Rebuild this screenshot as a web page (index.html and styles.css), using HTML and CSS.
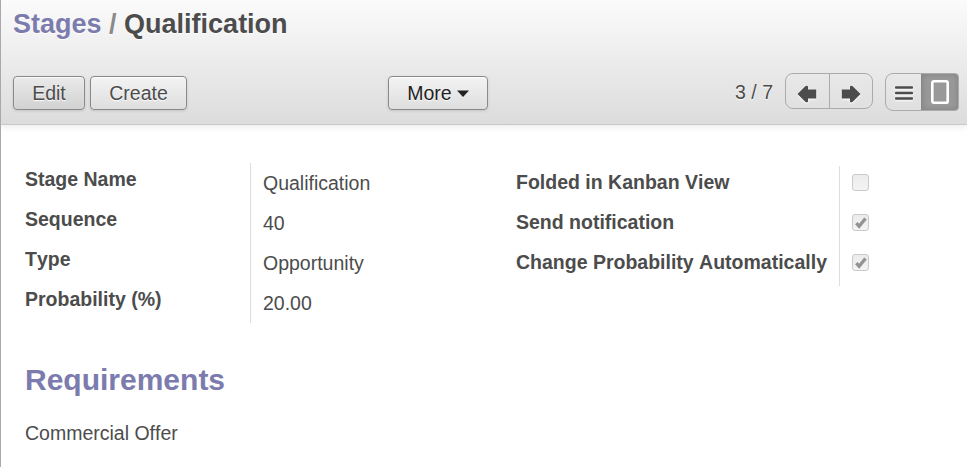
FILE: index.html
```html
<!DOCTYPE html>
<html lang="en">
<head>
<meta charset="utf-8">
<title>Stages / Qualification</title>
<link rel="stylesheet" href="styles.css">
</head>
<body>
<header class="header">
  <h1 class="breadcrumb"><a class="crumb">Stages</a> <span class="slash">/</span> <span>Qualification</span></h1>
  <div class="toolbar">
    <div class="actions">
      <button class="btn edit">Edit</button>
      <button class="btn create">Create</button>
    </div>
    <button class="btn more">More<svg class="caret" width="12" height="7" viewBox="0 0 12 7"><path d="M0 .5h12L6 7z" fill="currentColor"/></svg></button>
    <div class="right">
      <span class="pager">3 / 7</span>
      <div class="group nav">
        <button class="cell"><svg class="icon" width="20" height="18" viewBox="0 0 20 18"><path d="M.5 9 8.300 1.200Q9.500.300 11 1.300V4.400h8.200v9.200H11v3.100q-1.500 1-2.700.1z" fill="currentColor"/></svg></button>
        <button class="cell"><svg class="icon" width="20" height="18" viewBox="0 0 20 18"><path d="M19.500 9 11.700 1.200Q10.500.300 9 1.300V4.400H.8v9.200H9v3.100q1.500 1 2.700.1z" fill="currentColor"/></svg></button>
      </div>
      <div class="group views">
        <button class="cell"><svg class="icon" width="18" height="14" viewBox="0 0 18 14"><path d="M1 1.500h16M1 7h16M1 12.500h16" stroke="currentColor" stroke-width="2.400" stroke-linecap="round"/></svg></button>
        <button class="cell active"><svg width="20" height="26" viewBox="0 0 20 26"><rect x="2.300" y="2.300" width="15.400" height="21.400" rx="1.500" fill="none" stroke="#fff" stroke-width="2.600"/></svg></button>
      </div>
    </div>
  </div>
</header>
<main class="sheet">
  <div class="fields">
    <dl class="labels left-labels"><dt>Stage Name</dt><dt>Sequence</dt><dt>Type</dt><dt>Probability (%)</dt></dl>
    <dl class="values"><dd>Qualification</dd><dd>40</dd><dd>Opportunity</dd><dd>20.00</dd></dl>
    <dl class="labels right-labels"><dt>Folded in Kanban View</dt><dt>Send notification</dt><dt>Change Probability Automatically</dt></dl>
    <div class="checks">
      <div class="check-row"><span class="box"></span></div>
      <div class="check-row"><span class="box"><svg width="12" height="12" viewBox="0 0 12 12"><path d="M1.300 6.200 4.100 9.200 10.500 1.500" fill="none" stroke="#929292" stroke-width="3.300"/></svg></span></div>
      <div class="check-row"><span class="box"><svg width="12" height="12" viewBox="0 0 12 12"><path d="M1.300 6.200 4.100 9.200 10.500 1.500" fill="none" stroke="#929292" stroke-width="3.300"/></svg></span></div>
    </div>
  </div>
  <h2 class="heading">Requirements</h2>
  <p class="note">Commercial Offer</p>
</main>
</body>
</html>
```
FILE: styles.css
```css
* { box-sizing: border-box; }
body {
  margin: 0;
  height: 467px;
  overflow: hidden;
  border-left: 1px solid #a9a8ae;
  background: #fff;
  color: #4c4c4c;
  font: 19.5px/30px "Liberation Sans", Arial, sans-serif;
  font-kerning: none;
}
.header {
  height: 125px;
  padding: 8px 8px 0 12px;
  border-bottom: 1px solid #c8c8c8;
  background: linear-gradient(#fbfbfb, #dcdcdc);
  box-shadow: 0 1px 8px rgba(0, 0, 0, .1);
  text-shadow: 0 1px 1px #fff;
}
.breadcrumb { margin: 0; font-size: 27px; line-height: 32px; }
.crumb { color: #7c7bad; }
.slash { color: #8a8a8a; }
.toolbar { display: grid; grid-template-columns: 375px 100px 1fr; margin-top: 33px; }
.actions { display: flex; gap: 5px; padding-top: 3px; }
button { margin: 0; padding: 0; font: inherit; font-kerning: none; color: inherit; text-shadow: inherit; }
.btn {
  height: 34px;
  border: 1px solid #898989;
  border-radius: 4px;
  background: linear-gradient(#f3f3f3, #dedede);
  box-shadow: 0 1px 3px rgba(0, 0, 0, .12), inset 0 1px 1px rgba(255, 255, 255, .8);
}
.edit { width: 72px; background: linear-gradient(#eaeaea, #d2d2d2); }
.create { width: 97px; }
.more { display: flex; align-items: center; justify-content: center; gap: 5px; margin-top: 3px; color: #222; }
.right { display: flex; justify-content: flex-end; }
.pager { margin-right: 12px; line-height: 38px; }
.group { display: flex; border: 1px solid #ababab; border-radius: 8px; }
.nav { width: 88px; height: 36px; margin-right: 12px; }
.views { width: 74px; height: 38px; overflow: hidden; border-radius: 8px 4px 4px 8px; }
.views .cell { flex: none; width: 35px; }
.views .icon { margin-top: 1px; }
.cell { display: flex; flex: 1; align-items: center; justify-content: center; border: 0; background: none; }
.cell + .cell { border-left: 1px solid #ababab; }
.nav .icon { margin-top: 5px; }
.icon { filter: drop-shadow(0 1px 1px #fff); }
.views .active { width: 37px; background: #999; box-shadow: inset 0 0 6px #808080; border-left-color: #888; }
.sheet { padding: 38px 24px 0; }
.fields { display: grid; grid-template-columns: 225px 266px 323px 1fr; height: 160px; }
dl, dd { margin: 0; }
dt, dd { height: 40px; }
dt { font-weight: 700; }
.left-labels { padding-top: 1px; }
.values { height: 160px; border-left: 1px solid #ddd; padding: 5px 0 0 12px; }
.right-labels { margin-top: 3px; padding-top: 1px; }
.checks { height: 120px; margin-top: 3px; border-left: 1px solid #ddd; padding-left: 12px; }
.check-row { height: 40px; padding-top: 8px; }
.box { display: flex; align-items: center; justify-content: center; width: 17px; height: 17px; border: 1px solid #c9c9c9; border-radius: 3px; background: linear-gradient(#ececec, #f3f3f3); }
.heading { margin: 39px 0 0; color: #7c7bad; font-size: 30px; line-height: 36px; }
.note { margin: 20px 0 0; }
```
